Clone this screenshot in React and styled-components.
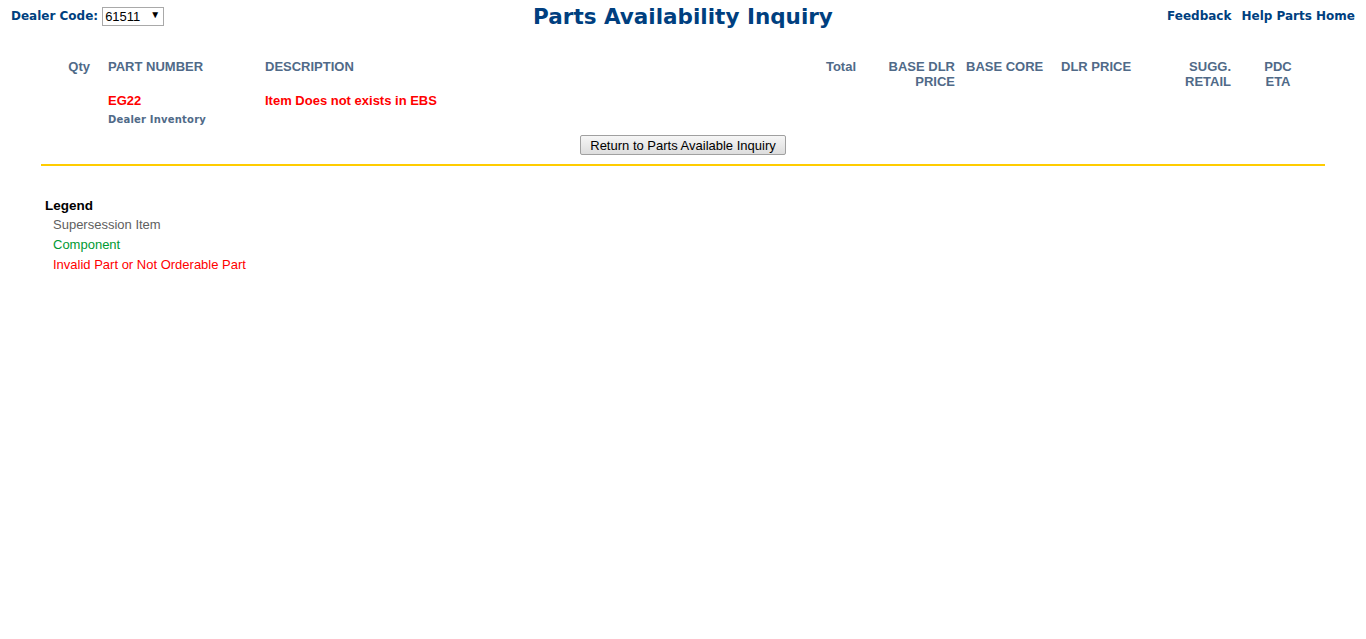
import React from "react";
import styled, { createGlobalStyle } from "styled-components";

const GlobalStyle = createGlobalStyle`
    body {
        margin: 0;
        background: #fff;
        font-family: "Liberation Sans", Arial, sans-serif;
    }
`;

const columns = "49px 175px 535px 56px 99px 106px 119px 51px 94px";

const App = () => {
    return (
        <>
            <GlobalStyle />
            <Page>
                <TopBar>
                    <DealerBox>
                        <DealerLabel>Dealer Code:</DealerLabel>
                        <SelectWrap>
                            <Select defaultValue="61511">
                                <option value="61511">61511</option>
                            </Select>
                            <Arrow>▼</Arrow>
                        </SelectWrap>
                    </DealerBox>
                    <Title>Parts Availability Inquiry</Title>
                    <Links>
                        <TopLink href="#">Feedback</TopLink>
                        <TopLink href="#">Help Parts Home</TopLink>
                    </Links>
                </TopBar>

                <Grid>
                    <Head align="right">Qty</Head>
                    <Head pad="18px">PART NUMBER</Head>
                    <Head>DESCRIPTION</Head>
                    <Head align="right">Total</Head>
                    <Head align="right">BASE DLR<br />PRICE</Head>
                    <Head pad="11px">BASE CORE</Head>
                    <Head>DLR PRICE</Head>
                    <Head align="right">SUGG.<br />RETAIL</Head>
                    <Head align="center">PDC<br />ETA</Head>

                    <Cell />
                    <Cell pad="18px">
                        <ErrText>EG22</ErrText>
                        <SubNote>Dealer Inventory</SubNote>
                    </Cell>
                    <Cell>
                        <ErrText>Item Does not exists in EBS</ErrText>
                    </Cell>
                    <Cell />
                    <Cell />
                    <Cell />
                    <Cell />
                    <Cell />
                    <Cell />
                </Grid>

                <ButtonRow>
                    <Button type="button">Return to Parts Available Inquiry</Button>
                </ButtonRow>
                <Rule />

                <Legend>
                    <LegendTitle>Legend</LegendTitle>
                    <LegendItem color="#606060">Supersession Item</LegendItem>
                    <LegendItem color="#009933">Component</LegendItem>
                    <LegendItem color="#ff0000">Invalid Part or Not Orderable Part</LegendItem>
                </Legend>
            </Page>
        </>
    );
};

export default App;

const Page = styled.div`
    padding: 0 11px;
`;

const TopBar = styled.div`
    display: grid;
    grid-template-columns: 1fr auto 1fr;
    align-items: center;
    height: 32px;
`;

const DealerBox = styled.div`
    display: flex;
    align-items: center;
    gap: 4px;
`;

const DealerLabel = styled.span`
    font-family: "DejaVu Sans", Verdana, sans-serif;
    font-size: 12px;
    font-weight: bold;
    color: #003f7f;
`;

const SelectWrap = styled.span`
    position: relative;
    display: inline-block;
`;

const Select = styled.select`
    appearance: none;
    width: 62px;
    height: 19px;
    border: 1px solid #a9a9a9;
    background: #fff;
    font-family: "Liberation Sans", Arial, sans-serif;
    font-size: 13px;
    color: #000;
    padding: 0 0 0 2px;
    margin: 0;
    border-radius: 0;
`;

const Arrow = styled.span`
    position: absolute;
    right: 4px;
    top: 2px;
    font-size: 10px;
    color: #000;
    pointer-events: none;
`;

const Title = styled.h1`
    margin: 0;
    font-family: "DejaVu Sans", Verdana, sans-serif;
    font-size: 21.5px;
    font-weight: bold;
    color: #003f7f;
`;

const Links = styled.div`
    display: flex;
    justify-content: flex-end;
    gap: 10px;
`;

const TopLink = styled.a`
    font-family: "DejaVu Sans", Verdana, sans-serif;
    font-size: 12px;
    font-weight: bold;
    color: #003f7f;
    text-decoration: none;
`;

const Grid = styled.div`
    display: grid;
    grid-template-columns: ${columns};
    margin: 27px 30px 0;
`;

const Head = styled.div`
    font-size: 13px;
    font-weight: bold;
    color: #506a88;
    line-height: 15px;
    text-align: ${(p) => p.align || "left"};
    padding-left: ${(p) => p.pad || "0"};
`;

const Cell = styled.div`
    padding-top: 4px;
    padding-left: ${(p) => p.pad || "0"};
`;

const ErrText = styled.div`
    font-size: 13px;
    font-weight: bold;
    color: #ff0000;
    line-height: 16px;
`;

const SubNote = styled.div`
    margin-top: 5px;
    font-family: "DejaVu Sans", Verdana, sans-serif;
    font-size: 10px;
    font-weight: bold;
    color: #506a88;
    letter-spacing: 0.2px;
`;

const ButtonRow = styled.div`
    display: flex;
    justify-content: center;
    margin-top: 10px;
`;

const Button = styled.button`
    font-family: "Liberation Sans", Arial, sans-serif;
    font-size: 13px;
    color: #000;
    height: 20px;
    padding: 0 9px;
    background: linear-gradient(#f6f6f6, #dddddd);
    border: 1px solid #a0a0a0;
    border-radius: 2px;
`;

const Rule = styled.div`
    height: 2px;
    background: #ffcc00;
    margin: 9px 30px 0;
`;

const Legend = styled.div`
    margin: 30px 0 0 34px;
`;

const LegendTitle = styled.div`
    font-size: 13.5px;
    font-weight: bold;
    color: #000;
    line-height: 19px;
`;

const LegendItem = styled.div`
    font-size: 13px;
    color: ${(p) => p.color};
    line-height: 20px;
    padding-left: 8px;
`;
